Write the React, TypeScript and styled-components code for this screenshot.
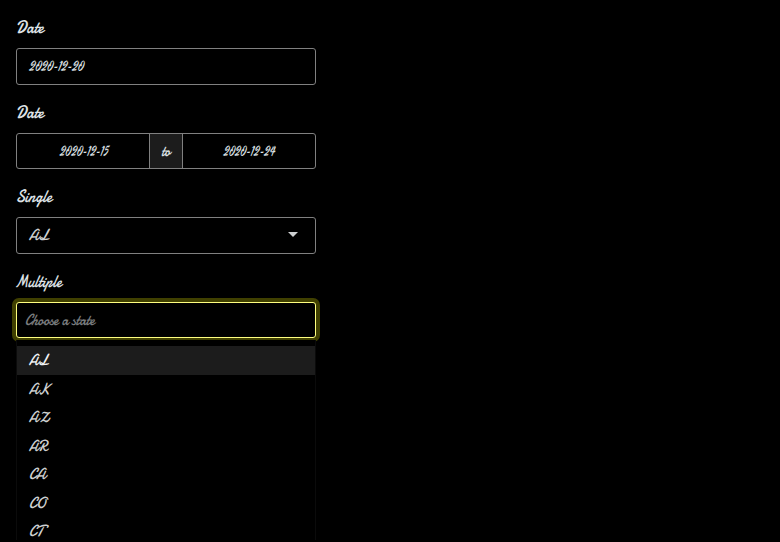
import React from "react";
import styled, { createGlobalStyle } from "styled-components";

const GlobalStyle = createGlobalStyle`
  * { box-sizing: border-box; }
  html, body { margin: 0; background: #000; height: 100%; overflow: hidden; }
`;

const Page = styled.main`
  width: 332px;
  height: 542px;
  padding: 11px 16px 0;
  overflow: hidden;
  background: #000;
  color: #dee2e6;
  font-family: Damion, "Liberation Serif", serif;
`;

/* Slanted lettering; $x is the horizontal stretch, $y the vertical one. */
const Script = styled.span<{ $x: number; $y?: number; $origin?: string }>`
  display: inline-block;
  white-space: nowrap;
  transform: scale(${(p) => p.$x}, ${(p) => p.$y ?? 1.08}) skewX(-4deg);
  transform-origin: ${(p) => p.$origin ?? "left"} center;
`;

const DateText = styled(Script)`
  font-family: Yesteryear, "Liberation Serif", serif;
  font-size: 13.5px;
`;

const Field = styled.section`
  height: 84.6px;
`;

const Label = styled.label<{ $shift?: number }>`
  display: block;
  height: 37px;
  margin-left: ${(p) => p.$shift ?? 0}px;
  font-size: 17px;
  line-height: 33px;
`;

const Control = styled.div<{ $focused?: boolean }>`
  display: flex;
  align-items: center;
  height: 36.6px;
  border: 1px solid ${(p) => (p.$focused ? "#ffff80" : "#808080")};
  border-radius: 3px;
  background: #000;
  box-shadow: ${(p) => (p.$focused ? "0 0 0 4px #404000" : "none")};
`;

const Value = styled.span`
  padding-left: 12px;
  font-size: 15px;
  line-height: 20px;
`;

const SingleDate = styled(Value)`
  padding-left: 13px;
`;

const RangeDate = styled(Value)`
  flex: 1;
  padding-left: 2px;
  text-align: center;
`;

const StartDate = styled(RangeDate)`
  flex: 0 0 132px;
  padding-left: 3px;
`;

const Separator = styled.span`
  display: flex;
  align-items: center;
  justify-content: center;
  width: 34px;
  height: 100%;
  border: solid #808080;
  border-width: 0 1px;
  background: #1c1c1c;
  font-size: 15px;
`;

const Arrow = styled.svg`
  width: 10px;
  height: 5px;
  margin-left: auto;
  margin-right: 17px;
  margin-top: -2px;
`;

const StateValue = styled(Value)`
  color: #ced0d1;
`;

const Placeholder = styled(Value)`
  padding-left: 8px;
  color: #787b7d;
`;

const Menu = styled.ul`
  position: relative;
  height: 200px;
  margin: 1.6px 0 0;
  padding: 6.4px 0 0;
  overflow: hidden;
  list-style: none;
  background: #000;
  border: solid #0b0b0b;
  border-width: 0 1px;
`;

const Option = styled.li<{ $active?: boolean }>`
  height: 28.5px;
  padding-left: 12px;
  background: ${(p) => (p.$active ? "#1c1c1c" : "transparent")};
  color: ${(p) => (p.$active ? "#f0f2f4" : "#ced0d1")};
  font-size: 15px;
  line-height: 28px;
`;

const states = ["AL", "AK", "AZ", "AR", "CA", "CO", "CT"];

export default function App() {
  return (
    <>
      <GlobalStyle />
      <Page>
        <Field>
          <Label><Script $x={0.93}>Date</Script></Label>
          <Control><SingleDate><DateText $x={0.78} $y={1}>2020-12-20</DateText></SingleDate></Control>
        </Field>
        <Field>
          <Label><Script $x={0.93}>Date</Script></Label>
          <Control>
            <StartDate><DateText $x={0.74} $y={1} $origin="center">2020-12-15</DateText></StartDate>
            <Separator><Script $x={0.85} $origin="center">to</Script></Separator>
            <RangeDate><DateText $x={0.74} $y={1} $origin="center">2020-12-24</DateText></RangeDate>
          </Control>
        </Field>
        <Field>
          <Label><Script $x={0.91}>Single</Script></Label>
          <Control>
            <StateValue><Script $x={1.01}>AL</Script></StateValue>
            <Arrow viewBox="0 0 10 5"><path d="M0 0h10L5 5z" fill="#ced0d1" /></Arrow>
          </Control>
        </Field>
        <section>
          <Label $shift={-1}><Script $x={0.87}>Multiple</Script></Label>
          <Control $focused><Placeholder><Script $x={0.93}>Choose a state</Script></Placeholder></Control>
          <Menu>
            {states.map((s, i) => (
              <Option key={s} $active={i === 0}><Script $x={0.98}>{s}</Script></Option>
            ))}
          </Menu>
        </section>
      </Page>
    </>
  );
}
